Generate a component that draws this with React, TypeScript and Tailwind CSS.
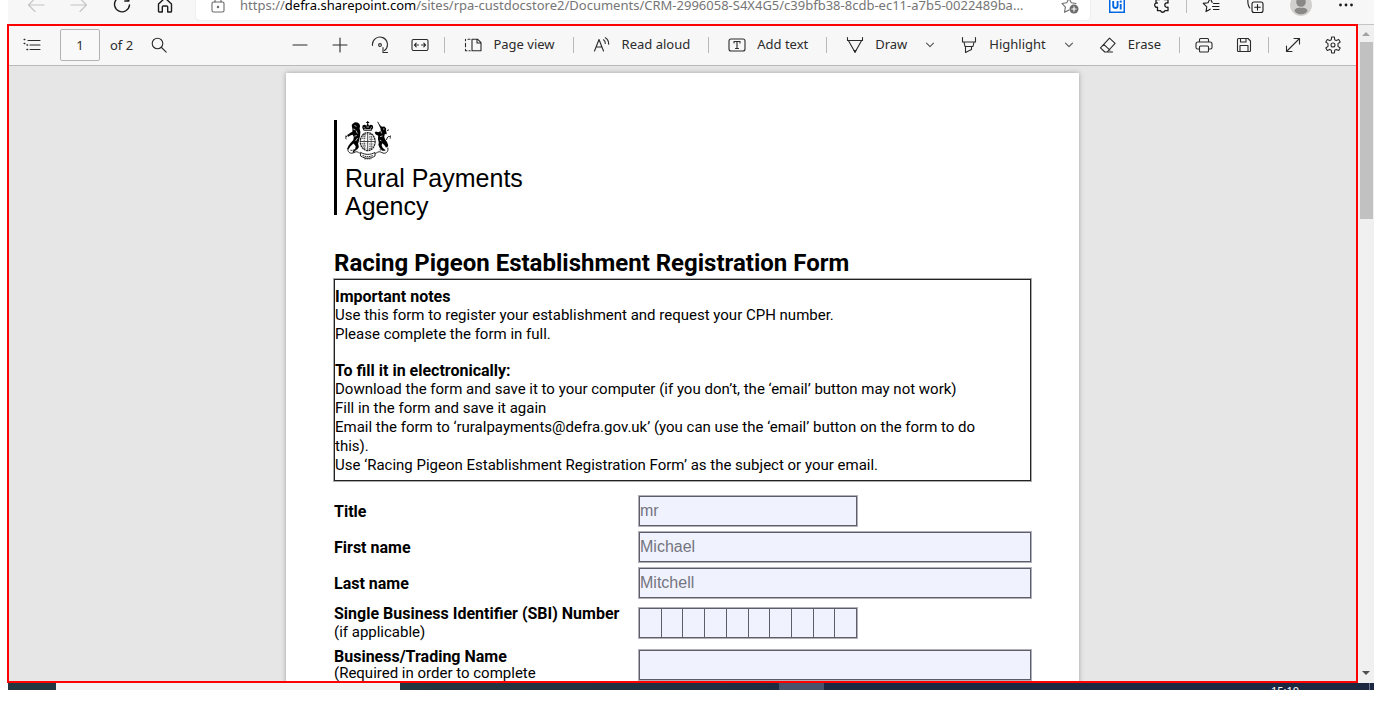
import type { ReactNode } from "react";

type IconProps = { children: ReactNode; box?: number; className?: string };

function Icon({ children, box = 18, className = "size-[18px] text-[#2b2b2b]" }: IconProps) {
  return (
    <svg
      viewBox={`0 0 ${box} ${box}`}
      className={`shrink-0 ${className}`}
      fill="none"
      stroke="currentColor"
      strokeWidth="1.1"
      strokeLinecap="round"
      strokeLinejoin="round"
      aria-hidden="true"
    >
      {children}
    </svg>
  );
}

function Crest() {
  return (
    <svg viewBox="0 0 46 39" className="h-[39px] w-[46px]" aria-label="Royal coat of arms" role="img">
      <g fill="#000">
        <path d="M8 2.500l2-1.300 2.500.3 1.800 1.300.8 2.200-.5 2.600.8 3.200-.4 4.500-1 4.200-.9 3.300.8 3.200-1.500 2.200-2.200 1.200-1.300 2H7.400l.9-1.600 2-2.200.4-2.400-2.100-2.600-1 .6-2.300 2.400-1.800 3-1.200-.6 1-2.900 2-2.900 3-3.200.5-2.900-1.200-2.400-2.400.8-1.800 1.300-1-.6.6-1.500 2-1.700 2.300-1.200.2-2.400L7 6l-.3-1.900z" />
        <path d="M33.600 3.200l3.400 2.600 2.400-.3 1.800 2-.3 2.100.8 2.400-.3 1.300-1.600-.2-.6 3 1 2.400 1.800 2.500 1.200 3-.6 2-1.700.5-1.600-2.500-2-1.700-.7 2 1.200 2.800 2 1.300-.2 1.400-2.400-.3-2.300-2.300-1.500-3.200.4-2.600-.8-3.100.2-3.500-2.500-1.400-1-1.800 1.200-1.200 2.400.9 2.200-1.300.2-2z" />
        <path d="M17.200 6.500l.6-2.300 1.900-.4 1.800 1 .5-1.600h1.400l.5 1.600 1.800-1 1.900.4.6 2.300-1.600 3.200h-7.800zM22.200 0h1v4h-1zM21.200 1h3v1h-3z" />
      </g>
      <g fill="none" stroke="#fff" strokeWidth="0.7">
        <path d="M18.600 6l1.600 1.600M26.800 6l-1.600 1.600M21.400 6h2.600M19 8.600h7.400" />
        <path d="M9.500 4.400l2 1M8.200 8l2 .8M11 9.500l1.400 3M9.400 15.200l2.400-.7M12.600 17l-2 3M35.600 9.400l1 3M38 8h1.500M35 15.600l2.500-.6M34.800 19l1.600 1" />
      </g>
      <ellipse cx="22.700" cy="20.600" rx="7.400" ry="9" fill="#fff" stroke="#222" strokeWidth="1.300" strokeDasharray="2 .5" />
      <g fill="none" stroke="#333" strokeWidth="0.9">
        <path d="M22.700 12v17M15.800 20.500h13.800" />
        <path d="M17.400 15h4M17 17.200h4.200M18.300 13.200h3M24.200 13.600h3M24 16h4.400M24.400 18.300h4.400M16.600 22.800h4.600M17.500 25h3.800M18.800 27.200h2.600M24.200 23h4.400M24.200 25.300h3.800M24.200 27.500h2.400" strokeDasharray="1.400 .6" />
        <path d="M19.200 13v15M26.200 13v15" strokeDasharray="1 .9" />
      </g>
      <g fill="none" stroke="#222" strokeWidth="1">
        <path d="M4.700 13.500c-3 .4-5 2.600-3.400 4.800M2 16l-1.600-1M41.800 9.600l2.200-.8M41.400 19c1-4.800 4.600-4.400 3.800-1.400M45 16l.8-1.600" />
        <path d="M3 26.600c-1 4.600 2.400 6.800 6 5 3-1.800 4.400-.4 7.400 1.800M42.800 26.600c1 4.600-2.600 6.800-6 5-3-1.800-4.400-.4-7.400 1.800" />
        <path d="M5.400 29.200c2.400.7 4-1 6.200-.2M40.400 29.200c-2.400.7-4-1-6.200-.2" strokeDasharray="1.600 .5" />
        <path d="M15.600 31.400c4.600 2.600 10 2.600 14.400 0v3.600c-4.600 3-10 3-14.400 0z" fill="#fff" />
        <path d="M17.600 34.400c3.400 1.700 7 1.700 10.400 0M19.400 37.800h7" strokeDasharray="1.600 .6" />
        <path d="M35.800 6.200L32.600.8" />
      </g>
    </svg>
  );
}

const chevron = (
  <Icon box={10} className="size-[10px] text-[#555]">
    <path d="M1.500 3.200L5 6.700l3.500-3.500" />
  </Icon>
);

function Divider() {
  return <span className="mx-1 h-4 w-px shrink-0 bg-[#b9b9b9]" />;
}

function IconButton({ label, children }: { label: string; children: ReactNode }) {
  return (
    <button type="button" aria-label={label} className="flex h-8 w-10 shrink-0 items-center justify-center">
      {children}
    </button>
  );
}

function ToolButton({ label, icon }: { label: string; icon: ReactNode }) {
  return (
    <button type="button" className="flex h-8 shrink-0 items-center gap-[11px] pr-[14px] pl-[15px] whitespace-nowrap">
      {icon}
      {label}
    </button>
  );
}

function BrowserButton({ label, wide, children }: { label: string; wide?: boolean; children: ReactNode }) {
  return (
    <button
      type="button"
      aria-label={label}
      className={`flex h-8 shrink-0 items-center justify-center ${wide ? "w-[45px]" : "w-[43px]"}`}
    >
      {children}
    </button>
  );
}

function BrowserBar() {
  return (
    <header className="ml-px flex h-6 shrink-0 items-end overflow-hidden bg-[#f7f7f7]">
      <div className="flex h-[38px] w-full shrink-0 items-center pr-[6px] pl-[6px]">
        <BrowserButton label="Back">
          <Icon className="size-[18px] text-[#c4c4c4]">
            <path d="M17 9H1.500M8 2.500L1.500 9 8 15.500" />
          </Icon>
        </BrowserButton>
        <BrowserButton label="Forward">
          <Icon className="size-[18px] text-[#c4c4c4]">
            <path d="M1 9h15.500M10 2.500L16.500 9 10 15.500" />
          </Icon>
        </BrowserButton>
        <BrowserButton label="Refresh">
          <Icon className="size-[18px] text-[#1b1b1b]">
            <path d="M15.500 4.500A7.500 7.500 0 1 0 16.500 9M15.800 1v4h-4" strokeWidth="1.400" />
          </Icon>
        </BrowserButton>
        <BrowserButton label="Home">
          <Icon className="size-[18px] text-[#1b1b1b]">
            <path d="M2.500 8L9 2l6.500 6v7.200a.8.8 0 0 1-.8.8h-3v-5a1 1 0 0 0-1-1H7.300a1 1 0 0 0-1 1v5h-3a.8.8 0 0 1-.8-.8z" strokeWidth="1.400" />
          </Icon>
        </BrowserButton>

        <div className="mr-2 ml-[10px] flex h-[30px] min-w-0 flex-1 items-center rounded-[4px] bg-white pr-[11px] pl-[13px] font-['Noto_Sans',sans-serif] text-[13px] shadow-[0_0_2px_#ddd]">
          <Icon className="size-[18px] text-[#6b6b6b]">
            <rect x="3" y="6" width="12" height="10" rx="1.500" />
            <path d="M6 6V4.500a3 3 0 0 1 6 0V6" />
            <circle cx="9" cy="11" r=".7" fill="currentColor" />
          </Icon>
          <p className="ml-[13px] min-w-0 flex-1 overflow-hidden leading-5 whitespace-nowrap text-[#757575]">
            https://<span className="text-black">defra.sharepoint.com</span>
            /sites/rpa-custdocstore2/Documents/CRM-2996058-S4X4G5/c39bfb38-8cdb-ec11-a7b5-0022489ba...
          </p>
          <Icon className="size-[18px] text-[#6b6b6b]">
            <path d="M8 14l-4.500 2.300.9-5.100L1 7.500l4.700-.7L8 2.500l2.300 4.300 4.700.7" />
            <circle cx="13" cy="13" r="4.500" fill="currentColor" stroke="none" />
            <path d="M13 10.800v4.400M10.800 13h4.400" stroke="#fff" />
          </Icon>
        </div>

        <button type="button" aria-label="UiPath" className="flex h-8 w-[38px] shrink-0 items-center justify-center">
          <svg viewBox="0 0 16 16" className="size-4" aria-hidden="true">
            <rect x="0" y="0" width="16" height="16" fill="#0067df" />
            <rect x="1.500" y="1.500" width="13" height="13" fill="#fff" />
            <path d="M4.200 4v4.800a2.200 2.200 0 0 0 4.400 0V4M11.700 7v5.500" fill="none" stroke="#0067df" strokeWidth="1.900" />
            <rect x="10.700" y="3.600" width="2" height="2" fill="#0067df" />
          </svg>
        </button>
        <span className="w-[4px] shrink-0" />
        <BrowserButton label="Extensions">
          <Icon className="size-[18px] text-[#1b1b1b]">
            <path d="M3 3.500h3.500a2.300 2.300 0 0 1 4.500 0h4V7a2.300 2.300 0 1 0 0 4.200v3.500h-3.200a2.200 2.200 0 0 1-4.200 0H4.500v-3.500a2.200 2.200 0 1 1 0-4.200H3z" strokeWidth="1.300" />
          </Icon>
        </BrowserButton>
        <span className="mr-px ml-[3px] h-4 w-px shrink-0 bg-[#bdbdbd]" />
        <BrowserButton label="Favourites" wide>
          <Icon className="size-[18px] text-[#1b1b1b]">
            <path d="M8.200 13.200L4 15.600l.8-4.800L1.200 7.400 6 6.700 8.200 2.400l2 4M11.500 7.500h5.500M10.500 10.500h6.500M11.500 13.500h5.500" />
          </Icon>
        </BrowserButton>
        <BrowserButton label="Collections" wide>
          <Icon className="size-[18px] text-[#1b1b1b]">
            <rect x="5" y="6" width="11" height="10.500" rx="2" />
            <path d="M10.500 8.500v5.500M7.700 11.250h5.600M2.800 12C1.500 10.500.8 8 .8 4" />
          </Icon>
        </BrowserButton>
        <BrowserButton label="Profile" wide>
          <svg viewBox="0 0 22 22" className="size-[22px]" aria-hidden="true">
            <circle cx="11" cy="11" r="11" fill="#d2d0ce" />
            <circle cx="11" cy="8" r="4.800" fill="#8a8886" />
            <path d="M4.500 17c.5-3 3-3.300 6.500-3.300s6 .3 6.500 3.300a8 8 0 0 1-13 0z" fill="#8a8886" />
          </svg>
        </BrowserButton>
        <BrowserButton label="More" wide>
          <svg viewBox="0 0 16 4" className="h-1 w-4" fill="#1b1b1b" aria-hidden="true">
            <circle cx="2.500" cy="2" r="1.400" />
            <circle cx="8" cy="2" r="1.400" />
            <circle cx="13.500" cy="2" r="1.400" />
          </svg>
        </BrowserButton>
      </div>
    </header>
  );
}

function PdfToolbar() {
  return (
    <div className="flex h-10 shrink-0 items-center border-b border-[#b9b9b9] bg-[#f7f7f7] pr-[3px] pb-px font-['Noto_Sans',sans-serif] text-[13px] text-[#2b2b2b]">
      <div className="flex items-center pl-[3px]">
        <IconButton label="Contents">
          <Icon>
            <path d="M5 4.500h12M7 9h10M7 13.500h10" />
            <path d="M1.200 3.500h.6M1.200 7.500h.6M4 9h.6M4 13.500h.6" strokeWidth="1.500" />
          </Icon>
        </IconButton>
        <input
          aria-label="Page number"
          defaultValue="1"
          className="ml-2 h-8 w-10 rounded-[2px] border border-[#b3b3b3] bg-[#f9f9f9] text-center"
        />
        <span className="mr-2 ml-[10px] leading-5">of 2</span>
        <button type="button" aria-label="Find" className="flex h-8 w-9 items-center justify-center">
          <Icon>
            <circle cx="7.500" cy="7.500" r="5.300" />
            <path d="M11.500 11.500l4.700 4.700" />
          </Icon>
        </button>
      </div>

      <div className="ml-auto flex items-center">
        <IconButton label="Zoom out">
          <Icon><path d="M2 9h14" /></Icon>
        </IconButton>
        <IconButton label="Zoom in">
          <Icon><path d="M2 9h14M9 2v14" /></Icon>
        </IconButton>
        <IconButton label="Rotate">
          <Icon>
            <path d="M1.500 9.500A7.500 7.500 0 1 1 13.500 14.500M12 11.500v5h4.500" />
            <circle cx="9" cy="9" r="1.400" />
          </Icon>
        </IconButton>
        <IconButton label="Fit to width">
          <Icon>
            <rect x="1" y="3.500" width="16" height="11" rx="1.500" />
            <path d="M3.500 9h4M10.500 9h4M5.200 7.200L3.500 9l1.700 1.800M12.800 7.200L14.500 9l-1.700 1.800" />
          </Icon>
        </IconButton>
        <Divider />
        <ToolButton
          label="Page view"
          icon={
            <Icon>
              <path d="M8 3.200h5.500L17 6.700v8H8zM13 3.200V7h4" />
              <path d="M6 3.200H4M1.500 3.200v1.600M1.500 7.200v3.600M1.500 13.200v1.500H3M5 14.700h1.200" />
            </Icon>
          }
        />
        <Divider />
        <ToolButton
          label="Read aloud"
          icon={
            <Icon>
              <path d="M1.500 15L6 3.500 10.500 15M3.200 11h5.600M10.500 3.800c1.300.8 1.800 2 1.800 3.700M12.300 1.800c2.400 1.400 3.400 3.600 3.400 6.500" />
            </Icon>
          }
        />
        <Divider />
        <ToolButton
          label="Add text"
          icon={
            <Icon>
              <rect x="1" y="3" width="16" height="12" rx="2" />
              <path d="M6 7V5.500h6V7M9 5.500v7M7.500 12.500h3" />
            </Icon>
          }
        />
        <Divider />
        <ToolButton
          label="Draw"
          icon={
            <Icon>
              <path d="M1.500 1.500v3h15v-3M2.500 4.800L8 14.500h2l5.500-9.700" />
              <path d="M8 14.500h2l-1 2z" fill="currentColor" />
            </Icon>
          }
        />
        <button type="button" aria-label="Draw options" className="flex h-8 w-[18px] items-center justify-center">
          {chevron}
        </button>
        <span className="w-[6px]" />
        <ToolButton
          label="Highlight"
          icon={
            <Icon>
              <path d="M2.500 1.500V6h13V1.500M4 6l1 4.500h8L14 6M5.500 10.500v6l6-3v-3" />
            </Icon>
          }
        />
        <button type="button" aria-label="Highlight options" className="flex h-8 w-[18px] items-center justify-center">
          {chevron}
        </button>
        <span className="w-[6px]" />
        <ToolButton
          label="Erase"
          icon={
            <Icon>
              <path d="M10.500 2.200l5.600 5.200-8 8.600H5.800L1.500 11.900zM4.700 8.400l6.200 5.700M7 16h6.500" />
            </Icon>
          }
        />
        <Divider />
        <IconButton label="Print">
          <Icon>
            <path d="M4.500 13H2.500A1.500 1.500 0 0 1 1 11.500V8a2 2 0 0 1 2-2h12a2 2 0 0 1 2 2v3.500a1.500 1.500 0 0 1-1.500 1.500h-2M4.500 6V3.500a1 1 0 0 1 1-1h7a1 1 0 0 1 1 1V6" />
            <rect x="4.500" y="10" width="9" height="6" rx="1" />
          </Icon>
        </IconButton>
        <IconButton label="Save">
          <Icon>
            <path d="M3.500 2.500h9.500l2.500 2.500v9.500a1 1 0 0 1-1 1h-11a1 1 0 0 1-1-1v-11a1 1 0 0 1 1-1zM5 15.500v-6h8v6M5.500 2.500V6H11V2.500" />
          </Icon>
        </IconButton>
        <Divider />
        <IconButton label="Full screen">
          <Icon>
            <path d="M2.500 15.500l13-13M10 2.500h5.500V8M2.500 10v5.500H8" />
          </Icon>
        </IconButton>
        <IconButton label="Settings">
          <Icon>
            <circle cx="9" cy="9" r="2" />
            <path d="M7.300 3.700L7.600 1h2.800l.3 2.700 1.500.9 2.500-1.100 1.500 2.500-2.200 1.600v2.800l2.200 1.600-1.500 2.500-2.500-1.100-1.500.9-.3 2.700H7.600l-.3-2.700-1.500-.9-2.500 1.100L1.800 12 4 10.400V7.600L1.800 6l1.500-2.500 2.500 1.100z" />
          </Icon>
        </IconButton>
      </div>
    </div>
  );
}

const fieldBox = "border border-[#5d5e69] bg-[#f0f2fe] shadow-[0_0_0_1px_#b0b1ba]";

function TextRow({ id, label, value, short }: { id: string; label: string; value: string; short?: boolean }) {
  return (
    <div className="grid grid-cols-[305px_1fr] items-center">
      <label htmlFor={id} className="font-bold">{label}</label>
      <input
        id={id}
        defaultValue={value}
        className={`h-[30px] font-['Liberation_Sans',Arial,sans-serif] text-[16px] text-[#74757e] ${fieldBox} ${short ? "w-[218px]" : "w-full"}`}
      />
    </div>
  );
}

function FormPage() {
  return (
    <article className="mx-auto mt-[7px] min-h-[1122px] w-[793px] bg-white px-12 pt-[47px] font-['Roboto',sans-serif] text-black shadow-[0_0_5px_rgba(0,0,0,0.3)]">
      <div className="flex gap-2">
        <div className="h-[95px] w-[3px] bg-black" />
        <div className="pt-px font-['Liberation_Sans',Arial,sans-serif] text-[25px] leading-7">
          <Crest />
          <p className="mt-1">
            Rural Payments
            <br />
            Agency
          </p>
        </div>
      </div>

      <h1 className="mt-[27px] text-[24px] leading-8 font-bold">Racing Pigeon Establishment Registration Form</h1>

      <section className="border border-[#222] pt-2 pb-[5px] text-[15px] leading-[19px] shadow-[0_0_0_1px_#aaa]">
        <h2 className="text-[16px] leading-[18px] font-bold">Important notes</h2>
        <p>Use this form to register your establishment and request your CPH number.</p>
        <p>Please complete the form in full.</p>
        <h2 className="mt-[18px] text-[16px] leading-[18px] font-bold">To fill it in electronically:</h2>
        <p>Download the form and save it to your computer (if you don’t, the ‘email’ button may not work)</p>
        <p>Fill in the form and save it again</p>
        <p>
          Email the form to ‘ruralpayments@defra.gov.uk’ (you can use the ‘email’ button on the form to do
          <br />
          this).
        </p>
        <p>Use ‘Racing Pigeon Establishment Registration Form’ as the subject or your email.</p>
      </section>

      <form className="mt-[15px] flex flex-col gap-[6px] text-[16px] leading-[19px]">
        <TextRow id="title" label="Title" value="mr" short />
        <TextRow id="first-name" label="First name" value="Michael" />
        <TextRow id="last-name" label="Last name" value="Mitchell" />
        <div className="grid grid-cols-[305px_1fr] items-center">
          <label htmlFor="sbi-0">
            <span className="block font-bold">Single Business Identifier (SBI) Number</span>
            <span className="block text-[15px]">(if applicable)</span>
          </label>
          <div className={`flex h-[30px] w-[218px] divide-x divide-[#5d5e69] ${fieldBox}`}>
            {Array.from({ length: 10 }, (_, i) => (
              <input key={i} id={`sbi-${i}`} aria-label={`Digit ${i + 1}`} maxLength={1} className="h-full w-0 flex-1 text-center" />
            ))}
          </div>
        </div>
        <div className="grid grid-cols-[305px_1fr] items-center leading-[17px]">
          <label htmlFor="business">
            <span className="block font-bold">Business/Trading Name</span>
            <span className="block text-[15px]">(Required in order to complete</span>
          </label>
          <input id="business" className={`h-[30px] w-full ${fieldBox}`} />
        </div>
      </form>
    </article>
  );
}

function ScrollBar() {
  return (
    <div className="flex w-4 shrink-0 flex-col items-center border-t border-[#c4c4c4] bg-[#f0f0f0]">
      <svg viewBox="0 0 16 17" className="h-[17px] w-4" aria-hidden="true">
        <path d="M4 11l4-4 4 4z" fill="#a3a3a3" />
      </svg>
      <div className="h-[177px] w-[13px] bg-[#c1c1c1]" />
      <svg viewBox="0 0 16 17" className="mt-auto h-[17px] w-4" aria-hidden="true">
        <path d="M4 5l4 4 4-4z" fill="#505050" />
      </svg>
    </div>
  );
}

function TaskBar() {
  return (
    <footer className="ml-px flex h-[7px] shrink-0 items-start overflow-hidden bg-[#22363f]">
      <div className="h-full w-12 shrink-0" />
      <div className="h-full w-[344px] shrink-0 bg-[#f2f2f2]" />
      <div className="h-full flex-1 bg-linear-to-r from-[#22363f] to-[#1e2c40]" />
      <div className="h-full w-[45px] shrink-0 bg-[#48536b]" />
      <div className="flex h-full w-[550px] shrink-0 justify-end bg-[#1c2742] pr-1">
        <time className="mr-[70px] pt-[2px] font-['Noto_Sans',sans-serif] text-[11px] leading-3 text-white">15:10</time>
        <span className="h-full w-px bg-[#6b748a]" />
      </div>
    </footer>
  );
}

export default function App() {
  return (
    <div className="flex h-screen flex-col overflow-hidden bg-white pr-2 pb-[17px] pl-[7px]">
      <BrowserBar />
      <div className="flex min-h-0 flex-1">
        <main className="flex min-w-0 flex-1 flex-col overflow-hidden border-2 border-[#ff0000] bg-[#e6e6e6]">
          <PdfToolbar />
          <div className="min-h-0 flex-1 overflow-hidden">
            <FormPage />
          </div>
        </main>
        <ScrollBar />
      </div>
      <TaskBar />
    </div>
  );
}
